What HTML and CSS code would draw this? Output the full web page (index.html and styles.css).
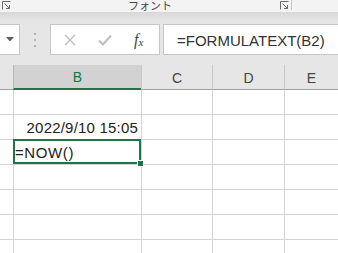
FILE: index.html
```html
<!DOCTYPE html>
<html lang="ja">
<head>
<meta charset="utf-8">
<link rel="stylesheet" href="styles.css">
</head>
<body>
<div class="app">
  <div class="ribbon">
    <span class="launcher left">
      <svg width="9" height="9" viewBox="0 0 9 9"><path d="M0.5 8.5V0.5H8.5" fill="none" stroke="#6a6a6a"/><path d="M2.5 2.5L7.5 7.5M4 7.5H7.5V4" fill="none" stroke="#6a6a6a"/></svg>
    </span>
    <span class="group-label">フォント</span>
    <span class="launcher right">
      <svg width="9" height="9" viewBox="0 0 9 9"><path d="M0.5 8.5V0.5H8.5" fill="none" stroke="#6a6a6a"/><path d="M2.5 2.5L7.5 7.5M4 7.5H7.5V4" fill="none" stroke="#6a6a6a"/></svg>
    </span>
    <span class="ribbon-sep"></span>
  </div>
  <div class="ribbon-shadow"></div>
  <div class="formula-bar">
    <div class="name-box">
      <svg width="8" height="5" viewBox="0 0 8 5"><path d="M0 0H8L4 4.5Z" fill="#5f5f5f"/></svg>
    </div>
    <div class="grip"><i></i><i></i><i></i></div>
    <div class="fx-buttons">
      <svg class="btn" width="12" height="12" viewBox="0 0 12 12"><path d="M1 1L11 11M11 1L1 11" stroke="#bdbdbd" stroke-width="1.4" fill="none"/></svg>
      <svg class="btn" width="14" height="12" viewBox="0 0 14 12"><path d="M1 6.5L5 10.5L13 1.5" stroke="#bdbdbd" stroke-width="2" fill="none"/></svg>
      <span class="fx">f<sub>x</sub></span>
    </div>
    <div class="formula-input">=FORMULATEXT(B2)</div>
  </div>
  <div class="sheet">
    <div class="hdr corner"></div>
    <div class="hdr sel">B</div>
    <div class="hdr">C</div>
    <div class="hdr">D</div>
    <div class="hdr">E</div>

    <div class="cell rh"></div><div class="cell"></div><div class="cell"></div><div class="cell"></div><div class="cell"></div>
    <div class="cell rh"></div><div class="cell num">2022/9/10 15:05</div><div class="cell"></div><div class="cell"></div><div class="cell"></div>
    <div class="cell rh"></div><div class="cell active"><span class="txt">=NOW()</span><span class="selbox"><span class="handle"></span></span></div><div class="cell"></div><div class="cell"></div><div class="cell"></div>
    <div class="cell rh"></div><div class="cell"></div><div class="cell"></div><div class="cell"></div><div class="cell"></div>
    <div class="cell rh"></div><div class="cell"></div><div class="cell"></div><div class="cell"></div><div class="cell"></div>
    <div class="cell rh"></div><div class="cell"></div><div class="cell"></div><div class="cell"></div><div class="cell"></div>
    <div class="cell rh"></div><div class="cell"></div><div class="cell"></div><div class="cell"></div><div class="cell"></div>
  </div>
</div>
</body>
</html>
```
FILE: styles.css
```css
* { box-sizing: border-box; }
html, body { margin: 0; padding: 0; }
body {
  width: 338px;
  height: 253px;
  overflow: hidden;
  background: #e6e6e6;
  font-family: "Liberation Sans", "Noto Sans CJK JP", sans-serif;
}
.app { width: 338px; height: 253px; overflow: hidden; }

.ribbon {
  height: 12px;
  background: #f3f3f3;
  display: flex;
  align-items: flex-start;
}
.launcher { display: flex; height: 9px; margin-top: 1px; }
.launcher.left { margin-left: 2px; }
.launcher.right { margin-left: auto; margin-top: 1px; }
.group-label {
  font-family: "Noto Sans CJK JP", sans-serif;
  font-size: 11px;
  line-height: 11px;
  height: 11px;
  color: #444;
  margin-left: 117px;
  margin-top: 0;
}
.ribbon-sep {
  width: 1px;
  height: 10px;
  background: #c8c8c8;
  margin-left: 2px;
  margin-right: 46px;
}
.ribbon-shadow {
  height: 10px;
  background: linear-gradient(#d8d8d8, #e6e6e6);
}

.formula-bar {
  margin-top: 2px;
  height: 31px;
  display: flex;
}
.name-box {
  width: 20px;
  background: #fff;
  border: 1px solid #c6c6c6;
  border-left: none;
  display: flex;
  align-items: center;
  justify-content: flex-end;
  padding-right: 5px;
}
.grip {
  width: 30px;
  display: flex;
  flex-direction: column;
  align-items: center;
  justify-content: center;
  gap: 4px;
}
.grip i { display: block; width: 2px; height: 2px; background: #b5b5b5; }
.fx-buttons {
  width: 110px;
  background: #fff;
  border: 1px solid #c6c6c6;
  display: flex;
  align-items: center;
  padding-left: 13px;
}
.fx-buttons .btn:first-child { margin-right: 22px; }
.fx-buttons .btn:nth-child(2) { margin-right: 22px; }
.fx {
  font-family: "Liberation Serif", serif;
  font-style: italic;
  font-size: 16px;
  color: #444;
  line-height: 1;
}
.fx sub { font-size: 11px; vertical-align: -1px; }
.formula-input {
  flex: 1;
  margin-left: 3px;
  background: #fff;
  border: 1px solid #c6c6c6;
  border-right: none;
  font-size: 15px;
  color: #333;
  display: flex;
  align-items: center;
  padding-left: 13px;
  padding-top: 1px;
}

.sheet {
  margin-top: 10px;
  display: grid;
  grid-template-columns: 13px 128px 71px 72px 1fr;
  grid-auto-rows: 25px;
}
.hdr {
  border-left: 1px solid #c8c8c8;
  border-bottom: 1px solid #9f9f9f;
  font-size: 14px;
  color: #444;
  display: flex;
  align-items: center;
  justify-content: center;
  padding-top: 1px;
}
.hdr.corner { border-left: none; }
.hdr.sel {
  background: #d2d2d2;
  color: #217346;
  border-left-color: #b5b5b5;
  border-bottom: 2px solid #217346;
}
.cell {
  background: #fff;
  border-left: 1px solid #d4d4d4;
  border-bottom: 1px solid #d4d4d4;
  font-size: 15px;
  color: #222;
  display: flex;
  align-items: center;
  padding: 1px 2px 0 2px;
}
.cell.rh { border-left: none; }
.cell.num { justify-content: flex-end; padding-right: 3px; letter-spacing: 0.2px; }
.cell.active { position: relative; padding-left: 1px; letter-spacing: 0.6px; }
.selbox {
  position: absolute;
  left: -1px;
  top: -1px;
  right: 0;
  bottom: 0;
  border: 2px solid #217346;
  z-index: 2;
}
.handle {
  position: absolute;
  right: -5px;
  bottom: -5px;
  width: 7px;
  height: 7px;
  background: #217346;
  border: 1px solid #fff;
}
```
